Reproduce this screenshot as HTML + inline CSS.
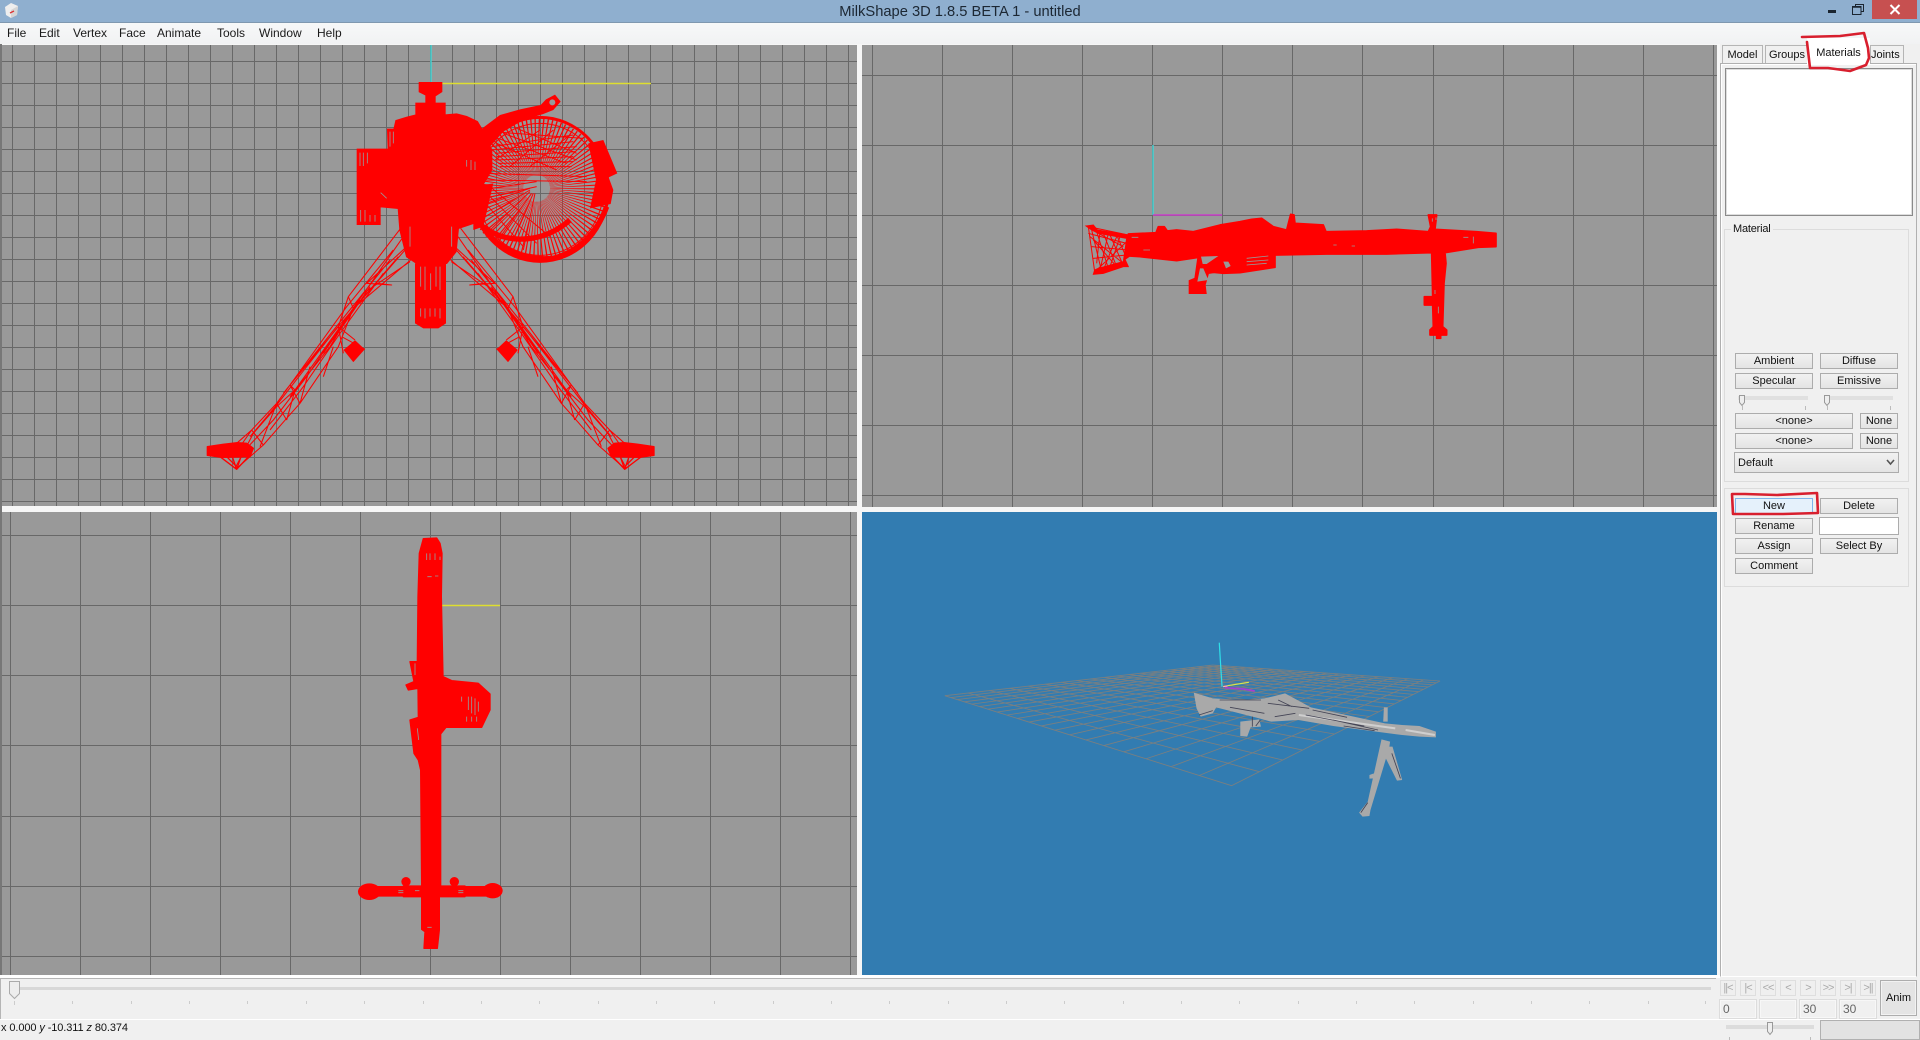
<!DOCTYPE html>
<html><head><meta charset="utf-8"><title>MilkShape 3D 1.8.5 BETA 1 - untitled</title>
<style>
html,body{margin:0;padding:0;width:1920px;height:1040px;overflow:hidden;background:#f0f0f0;font-family:"Liberation Sans",sans-serif;color:#111}
.a{position:absolute}
.vp{position:absolute;background:#999}
.b{position:absolute;box-sizing:border-box;height:16px;background:linear-gradient(#f1f1f1,#e4e4e4);border:1px solid #acacac;font-size:11px;text-align:center;line-height:15px;color:#111;white-space:nowrap}
.m{position:absolute;top:26px;font-size:12px;line-height:14px;color:#1a1a1a}
.t{position:absolute;box-sizing:border-box;top:45px;height:18px;background:#f0f0f0;border:1px solid #b5b5b5;border-bottom:0;font-size:11px;line-height:19px;text-align:center;overflow:hidden}
.n{position:absolute;box-sizing:border-box;top:980px;width:16px;height:16px;background:#efefef;border:1px solid #dedede;color:#aaa;font-size:11px;line-height:14px;text-align:center;letter-spacing:-1px}
.f{position:absolute;box-sizing:border-box;top:999px;height:20px;width:38px;background:#f0f0f0;border:1px solid #dcdcdc;box-shadow:inset 0 0 0 1px #f7f7f7;color:#666;font-size:12px;line-height:18px;padding-left:3px}
.g{position:absolute;box-sizing:border-box;border:1px solid #dcdcdc}
</style></head><body>
<!-- title bar -->
<div class="a" style="left:0;top:0;width:1920px;height:23px;background:#8fafcf;border-bottom:1px solid #7f98b0;box-sizing:border-box"></div>
<div class="a" style="left:0;top:1px;width:1920px;height:23px;text-align:center;font-size:14.7px;line-height:23px;color:#1c2733">MilkShape 3D 1.8.5 BETA 1 - untitled</div>
<svg class="a" style="left:3px;top:2px" width="17" height="17" viewBox="0 0 17 17"><path d="M8 1 15 4 14 13 8 16 3 13 2 5Z" fill="#eee"/><path d="M8 8 15 4 14 13 8 16Z" fill="#d5d5d5"/><path d="M7 11l4-2" stroke="#d33" stroke-width="1.4"/></svg>
<div class="a" style="left:1828px;top:10px;width:8px;height:3px;background:#1b2530"></div>
<svg class="a" style="left:1852px;top:4px" width="12" height="11" viewBox="0 0 12 11"><path d="M3.5 2.5V.5h8v7h-2M.5 2.5h8.5v8H.5z" fill="none" stroke="#1b2530"/><path d="M1 3h8" stroke="#1b2530" stroke-width="1.5"/></svg>
<div class="a" style="left:1872px;top:0;width:45px;height:19px;background:#c75050"></div>
<svg class="a" style="left:1889px;top:4px" width="12" height="11" viewBox="0 0 12 11"><path d="M1.5 1 10.5 10M10.5 1 1.5 10" stroke="#fff" stroke-width="2"/></svg>
<!-- menu -->
<div class="a" style="left:0;top:23px;width:1920px;height:21px;background:linear-gradient(#f7f8f9,#f1f2f3)"></div>
<span class="m" style="left:7px">File</span><span class="m" style="left:39px">Edit</span><span class="m" style="left:73px">Vertex</span><span class="m" style="left:119px">Face</span><span class="m" style="left:157px">Animate</span><span class="m" style="left:217px">Tools</span><span class="m" style="left:259px">Window</span><span class="m" style="left:317px">Help</span>
<!-- viewport area -->
<div class="a" style="left:0;top:44px;width:1720px;height:934px;background:#f6f6f6"></div>
<div class="a" style="left:0;top:44px;width:2px;height:934px;background:#777"></div>
<div class="vp" style="left:2px;top:45px;width:855px;height:461px;background-color:#999;background-image:linear-gradient(#686868 1px,transparent 1px),linear-gradient(90deg,#686868 1px,transparent 1px);background-size:22px 22px;background-position:10px 16px"></div>
<div class="vp" style="left:862px;top:45px;width:855px;height:462px"></div>
<div class="vp" style="left:2px;top:512px;width:855px;height:463px"></div>
<div class="vp" style="left:862px;top:512px;width:855px;height:463px;background:#327cb1"></div>
<svg class="a" style="left:0;top:0" width="1920" height="1040" viewBox="0 0 1920 1040" fill="none">
<!-- TR and BL grids -->
<path shape-rendering="crispEdges" stroke="#686868" d="M872.5 45V507M942.5 45V507M1012.5 45V507M1082.5 45V507M1152.5 45V507M1222.5 45V507M1292.5 45V507M1362.5 45V507M1433.5 45V507M1503.5 45V507M1573.5 45V507M1643.5 45V507M1713.5 45V507M862 75.5H1717M862 145.5H1717M862 215.5H1717M862 285.5H1717M862 355.5H1717M862 425.5H1717M862 495.5H1717
M10.5 512V975M80.5 512V975M150.5 512V975M220.5 512V975M290.5 512V975M360.5 512V975M430.5 512V975M500.5 512V975M570.5 512V975M640.5 512V975M710.5 512V975M780.5 512V975M850.5 512V975M2 535.5H857M2 605.5H857M2 675.5H857M2 745.5H857M2 816.5H857M2 886.5H857M2 956.5H857"/>

<!-- TL model -->
<path d="M431 45V83" stroke="#3fd8d8" stroke-width="1.4"/>
<path d="M442 83.500H651" stroke="#dede30" stroke-width="1.4"/>
<g transform="translate(190,60) scale(.33333)">
 <!-- legs -->
 <g stroke="#f00" stroke-width="3.2" stroke-linejoin="round">
  <path d="M632 505 475 710 445 800 300 975 260 1030 185 1110 140 1150 55 1165M640 530 490 745 415 850 315 990 260 1040 190 1120 135 1225M650 560 530 670 605 675 530 670M662 600 490 745 445 860 330 1030 290 1075 220 1155 140 1225M610 570 470 740 300 975M625 590 440 805 260 1035 180 1130M660 605 520 700 350 950 250 1080 165 1170M475 710 490 745M445 800 460 880M300 975 330 1030M260 1030 290 1080M185 1110 220 1155M300 975 315 990 290 1080M560 670 605 675M600 600 455 780 280 1000M645 570 480 760 420 860 300 1010M580 640 450 820 340 980 240 1110M540 680 430 840M510 720 400 880M495 840 445 800M525 868 455 830M360 920 330 1030M430 860 400 950M220 1155 185 1110 150 1160M260 1030 210 1160"/>
  <path fill="#f00" stroke="#f00" stroke-width="4" d="M52 1160 100 1153 142 1148 170 1150 190 1165 180 1190 95 1192 52 1186Z"/>
  <path stroke-width="4" d="M90 1190 140 1228 180 1185M140 1228 120 1170M140 1228 160 1170M110 1190 140 1220"/>
  <path fill="#f00" stroke="#f00" stroke-width="2" d="M462 870 495 842 523 868 490 905Z"/>
 </g>
 <g stroke="#f00" stroke-width="3.2" stroke-linejoin="round" transform="translate(1444,0) scale(-1,1)">
  <path d="M632 505 475 710 445 800 300 975 260 1030 185 1110 140 1150 55 1165M640 530 490 745 415 850 315 990 260 1040 190 1120 135 1225M650 560 530 670 605 675 530 670M662 600 490 745 445 860 330 1030 290 1075 220 1155 140 1225M610 570 470 740 300 975M625 590 440 805 260 1035 180 1130M660 605 520 700 350 950 250 1080 165 1170M475 710 490 745M445 800 460 880M300 975 330 1030M260 1030 290 1080M185 1110 220 1155M300 975 315 990 290 1080M560 670 605 675M600 600 455 780 280 1000M645 570 480 760 420 860 300 1010M580 640 450 820 340 980 240 1110M540 680 430 840M510 720 400 880M495 840 445 800M525 868 455 830M360 920 330 1030M430 860 400 950M220 1155 185 1110 150 1160M260 1030 210 1160"/>
  <path fill="#f00" stroke="#f00" stroke-width="4" d="M52 1160 100 1153 142 1148 170 1150 190 1165 180 1190 95 1192 52 1186Z"/>
  <path stroke-width="4" d="M90 1190 140 1228 180 1185M140 1228 120 1170M140 1228 160 1170M110 1190 140 1220"/>
  <path fill="#f00" stroke="#f00" stroke-width="2" d="M462 870 495 842 523 868 490 905Z"/>
 </g>
 <!-- drum -->
 <circle cx="1040" cy="385" r="125" stroke="#f00" stroke-width="170" stroke-dasharray="2.500 5.500"/>
 <ellipse cx="1050" cy="388" rx="205" ry="216" stroke="#f00" stroke-width="9"/>
 <ellipse cx="1050" cy="388" rx="190" ry="198" stroke="#f00" stroke-width="3"/>
 <path d="M862 470C900 560 1000 605 1090 595 1170 575 1225 510 1250 440" stroke="#f00" stroke-width="16"/>
 <path d="M880 500C950 555 1060 550 1140 480" stroke="#f00" stroke-width="16"/>
 <path d="M905 260 1150 225M905 270 1150 245M915 280 1160 260M920 290 1155 275M920 300 1150 290M925 310 1150 305M930 320 1145 320M910 230 1130 310M940 220 1160 300M980 205 1160 280M920 250 1100 330M915 300 1050 210M960 320 1090 210M1020 320 1140 225M880 340 1190 350M885 360 1190 365M870 390 1040 365M860 420 1040 380M905 215 1180 235" stroke="#f00" stroke-width="3"/>
 <path d="M860 400 1000 560M880 390 1040 550M900 380 1080 530M860 440 1020 385M870 480 1020 390M890 520 1020 395M920 545 1025 400M960 560 1030 400M1000 570 1035 400" stroke="#f00" stroke-width="3"/>
 <path fill="#f00" d="M870 210 930 165 990 148 1052 135 1068 118 1095 104 1112 125 1090 150 1060 162 1000 180 940 215 900 260Z"/>
 <circle cx="1087" cy="127" r="9" fill="#999"/>
 <path fill="#f00" d="M1195 250 1240 240 1282 340 1256 352 1270 390 1262 432 1200 445 1218 360Z"/>
 <!-- body -->
 <path fill="#f00" stroke="#f00" stroke-width="4" d="M688 68H755V95L735 108V130H765V165L800 162 830 170 862 185 880 215 905 270 905 330 878 375 860 420 850 490 805 505 798 575 770 610 680 610 650 590 630 510 625 445 570 440V493H502V268H595L593 208H612L618 182 650 172 678 165V130H708V105L688 95Z"/>
 <path fill="#f00" d="M850 380 910 370 880 500 850 510ZM675 610H768V790L745 805H700L675 790Z"/>
 <path stroke="#999" stroke-width="2.500" d="M510 278V318M520 278V318M532 278V310M512 450V485M525 450V485M540 465V485M555 465V485M600 215V260M610 215V250M830 300V320M843 300V330M855 305V330M692 620V680M705 620V690M722 640V690M738 620V680M750 620V690M692 745V770M705 745V775M720 745V770M735 745V770M750 745V775M660 500V560M785 500V560M572 398 590 415"/>
</g>

<!-- TR model -->
<path d="M1153 145V215" stroke="#3fd8d8" stroke-width="1.4"/>
<path d="M1153 215H1222" stroke="#c93fc9" stroke-width="1.6"/>
<g transform="translate(1060,130) scale(.33333)">
 <path stroke="#f00" stroke-width="3" d="M85 290 205 315M85 290 105 432M95 300 125 425M110 305 145 415M130 310 170 410M150 315 185 395M170 315 200 385M85 310 200 340M95 350 205 360M100 385 200 375M105 425 200 335M100 330 170 410M120 305 110 400M145 310 120 420M170 320 130 420M90 320 190 400M115 310 190 350M180 320 150 410"/>
 <path fill="#f00" stroke="#f00" stroke-width="3" d="M78 288 100 285 112 300 206 315 210 378 195 388 205 410 190 410 130 430 100 433 104 420 115 415 190 395 200 325 115 310 95 300Z"/>
 <path fill="#f00" stroke="#f00" stroke-width="5" stroke-linejoin="round" d="M205 312 288 308 295 290 313 290 322 303 350 300 400 305 480 285 540 275 575 268 605 265 640 290 680 300 692 253 702 255 705 280 790 285 798 305 920 303 1010 298 1105 305 1112 290 1105 255 1130 255 1125 298 1250 305 1308 310 1308 350 1255 352 1155 368 1158 400 1152 460 1148 590 1160 600 1160 615 1142 615 1142 625 1130 625 1130 615 1110 615 1110 600 1120 590 1118 525 1093 525 1093 500 1118 500 1115 368 980 372 800 372 645 375 645 412 540 428 490 430 440 425 450 420 430 380 350 392 240 380 210 378Z"/>
 <path fill="#f00" stroke="#f00" stroke-width="4" d="M415 375 500 375 510 420 445 430 435 465 438 490 388 490 388 452 405 445Z"/>
 <path fill="#999" d="M423 380 475 378 440 402 428 402ZM420 415 430 415 445 450 412 455ZM490 395 505 395 512 408 498 415Z"/>
 <path stroke="#999" stroke-width="2.500" d="M560 385 625 378M560 395 625 390M560 405 620 400M1125 480V492M1135 530V550M215 322H235M250 360H270M820 345H830M875 348H885M1210 322H1225M1240 320V340M1117 265V275M1128 262V270"/>
</g>

<!-- BL model -->
<path d="M441 605.500H500" stroke="#dede30" stroke-width="1.4"/>
<g transform="translate(340,520) scale(.33333)">
 <path fill="#f00" stroke="#f00" stroke-width="4" stroke-linejoin="round" d="M250 56 290 54 300 70 306 100 304 230 309 470 335 482 415 490 450 522 450 570 425 622 318 622 302 642 302 1098 375 1098 375 1130 298 1130 298 1230 292 1285H252L255 1235 245 1228 245 1130 190 1130 190 1098 245 1098 242 750 235 720 222 700 210 600 235 592 234 505 205 510 198 495 222 485 210 425 232 425 234 230 238 100Z"/>
 <path fill="#f00" d="M90 1098H450V1130H90Z"/>
 <ellipse cx="88" cy="1115" rx="34" ry="25" fill="#f00"/><ellipse cx="458" cy="1112" rx="30" ry="23" fill="#f00"/>
 <circle cx="198" cy="1085" r="14" fill="#f00"/><circle cx="343" cy="1085" r="14" fill="#f00"/>
 <path stroke="#999" stroke-width="2.500" d="M260 100V120M270 100V120M285 100V120M300 110V120M262 170H275M285 168H295M365 530V545M385 530V570M395 530V580M405 535V585M415 545V575M380 590V605M395 590V605M410 590V605M225 430V465M232 625 236 660M175 1112H190M175 1118H190M225 1112H238M355 1112H370M355 1118H370M262 1222H275"/>
</g>

<!-- BR plane -->
<g transform="translate(920,620) scale(.3444,.33333)" stroke="#7a7f80" stroke-width="2.600">
 <path d="M850 135 72 227M872.700 136.600 89.700 232.700M896 138.300 108.600 238.800M920.200 140.100 128.700 245.400M945.300 141.900 150.200 252.400M971.200 143.800 173.100 259.700M998 145.800 197.700 267.700M1026 147.800 224 276.300M1054.700 149.900 252.400 285.400M1084.800 152.100 283.100 295.400M1115.800 154.300 316.100 306.100M1148.200 156.700 352.100 317.900M1182 159.200 391.500 330.600M1217 161.700 434.300 344.400M1253.700 164.400 481.700 359.900M1291.800 167.200 533.800 376.800M1331.500 170 591.400 395.400M1373.200 173 656.300 416.300M1416.700 176.300 728.800 440M1462.200 179.600 811 466.600M1510 183 905 497
 M850 135 1510 183M827.900 137.600 1499.300 188.600M804.700 140.400 1487.900 194.500M780.500 143.200 1475.600 200.900M755 146.200 1462.400 207.800M728.300 149.400 1448.100 215.200M700.300 152.700 1432.700 223.200M670.700 156.200 1416 231.900M639.600 159.900 1397.700 241.400M606.700 163.800 1377.800 251.700M571.900 167.800 1355.600 263M535.100 172.200 1331.400 275.600M496.100 176.800 1304.600 289.500M454.700 181.700 1274.700 305M410.600 186.900 1241.200 322.400M363.500 192.500 1203.300 342M313.200 198.400 1160.200 364.400M259.400 204.800 1110.600 390.100M201.500 211.600 1053.100 420M139.200 219 985.400 455.100M72 227 905 497"/>
 <!-- axes -->
 <path d="M869 68 872 120 877 200" stroke="#2fe0e8" stroke-width="3.500"/>
 <path d="M893 197 955 187" stroke="#d8e84a" stroke-width="3.500"/>
 <path d="M880 200 893 198" stroke="#ffb0b0" stroke-width="3.500"/>
 <path d="M885 203 940 207 972 213" stroke="#a63ed0" stroke-width="5"/>
 <!-- gun -->
 <g stroke="none" fill="#a9a9a9">
  <path d="M795 218 850 235 945 240 1000 235 1030 228 1060 220 1135 262 1350 310 1400 315 1450 318 1498 335 1498 352 1450 350 1400 345 1200 318 1100 300 1020 305 985 295 860 262 850 280 815 290 803 265Z"/>
  <path d="M930 305 985 298 990 320 960 322 950 350 930 348Z"/>
  <path d="M1340 358 1365 365 1362 385 1308 570 1305 588 1285 590 1275 578 1300 545Z"/>
  <path d="M1358 380 1372 380 1400 480 1385 482 1350 410Z"/>
  <path d="M1347 262H1358V305H1345Z"/>
  <path d="M1305 465 1318 460 1318 475 1305 476Z"/>
 </g>
 <path stroke="#cfcfcf" stroke-width="6" d="M1100 285 1380 325M1410 330 1495 345"/>
 <path stroke="#445" stroke-width="2.500" d="M870 240 990 240M900 262 1000 280M1010 250 1130 265M1120 285 1290 318M1200 300 1330 330M1030 290 1090 280M965 290V320M975 318 988 300M1040 240 1080 260M1370 400 1395 475M1280 578 1300 548M810 285 850 272M1140 270 1240 292M1230 318 1320 332"/>
</g>
</svg>

<!-- right panel -->
<div class="a" style="left:1720px;top:44px;width:200px;height:934px;background:#f0f0f0"></div>
<div class="a" style="left:1720px;top:63px;width:197px;height:914px;box-sizing:border-box;border:1px solid #b0b0b0;border-bottom-color:#fff;background:#f0f0f0;box-shadow:inset 1px 1px 0 #fff"></div>
<div class="t" style="left:1722px;width:41px">Model</div>
<div class="t" style="left:1765px;width:44px">Groups</div>
<div class="t" style="left:1870px;width:34px;text-align:right;padding-right:4px">Joints</div>
<div class="a" style="left:1807px;top:38px;width:63px;height:27px;background:#fff;font-size:11px;line-height:31px;text-align:center;color:#111;box-sizing:border-box">Materials</div>
<div class="a" style="left:1725px;top:68px;width:188px;height:148px;box-sizing:border-box;border:1px solid #8a8a8a;background:#fff;box-shadow:inset 0 0 0 1px #ddd"></div>
<div class="g" style="left:1724px;top:229px;width:185px;height:253px"></div>
<div class="a" style="left:1731px;top:222px;background:#f0f0f0;padding:0 2px;font-size:11px;line-height:14px;letter-spacing:-.2px">Material</div>
<div class="g" style="left:1724px;top:488px;width:185px;height:99px"></div>
<div class="b" style="left:1735px;top:353px;width:78px">Ambient</div>
<div class="b" style="left:1820px;top:353px;width:78px">Diffuse</div>
<div class="b" style="left:1735px;top:373px;width:78px">Specular</div>
<div class="b" style="left:1820px;top:373px;width:78px">Emissive</div>
<div class="a" style="left:1738px;top:396px;width:70px;height:4px;background:#e0e0e0"></div>
<div class="a" style="left:1824px;top:396px;width:69px;height:4px;background:#e0e0e0"></div>
<svg class="a" style="left:1730px;top:392px" width="170" height="20" fill="none"><path d="M9.500 3.500h5v7l-2.500 3-2.500-3z" fill="#eee" stroke="#999"/><path d="M94.500 3.500h5v7l-2.500 3-2.500-3z" fill="#eee" stroke="#999"/><path d="M12.500 14v4M75.500 14v4M97.500 14v4M160.500 14v4" stroke="#bbb"/></svg>
<div class="b" style="left:1735px;top:413px;width:118px">&lt;none&gt;</div>
<div class="b" style="left:1860px;top:413px;width:38px">None</div>
<div class="b" style="left:1735px;top:433px;width:118px">&lt;none&gt;</div>
<div class="b" style="left:1860px;top:433px;width:38px">None</div>
<div class="b" style="left:1734px;top:452px;width:165px;height:21px;text-align:left;line-height:20px;padding-left:3px">Default</div>
<svg class="a" style="left:1886px;top:459px" width="9" height="7"><path d="M1 1l3.500 4L8 1" fill="none" stroke="#555" stroke-width="1.600"/></svg>
<div class="b" style="left:1735px;top:498px;width:78px;background:#e5f1fb;border-color:#7eb4ea">New</div>
<div class="b" style="left:1820px;top:498px;width:78px">Delete</div>
<div class="b" style="left:1735px;top:518px;width:78px">Rename</div>
<div class="a" style="left:1819px;top:517px;width:80px;height:18px;box-sizing:border-box;background:#fff;border:1px solid #acacac"></div>
<div class="b" style="left:1735px;top:538px;width:78px">Assign</div>
<div class="b" style="left:1820px;top:538px;width:78px">Select By</div>
<div class="b" style="left:1735px;top:558px;width:78px">Comment</div>
<!-- timeline -->
<div class="a" style="left:0;top:975px;width:1720px;height:3px;background:#fff"></div>
<div class="a" style="left:0;top:978px;width:1716px;height:41px;background:#f0f0f0;border-top:1px solid #b5b5b5;border-left:1px solid #b5b5b5;box-sizing:border-box"></div>
<div class="a" style="left:0;top:1019px;width:1920px;height:1px;background:#fff"></div>
<div class="a" style="left:10px;top:987px;width:1701px;height:3px;background:#d8d8d8"></div>
<svg class="a" style="left:0;top:978px" width="1720" height="30" fill="none">
<path d="M9.500 3.500h10v12l-5 5-5-5z" fill="#ededed" stroke="#aaa"/>
<path stroke="#ccc" d="M14.500 23v4M72.500 23v3M131.500 23v3M189.500 23v3M247.500 23v3M306.500 23v3M364.500 23v3M423.500 23v3M481.500 23v3M539.500 23v3M598.500 23v3M656.500 23v3M714.500 23v3M773.500 23v3M831.500 23v3M889.500 23v3M948.500 23v3M1006.500 23v3M1064.500 23v3M1123.500 23v3M1181.500 23v3M1239.500 23v3M1298.500 23v3M1356.500 23v3M1414.500 23v3M1473.500 23v3M1531.500 23v3M1589.500 23v3M1648.500 23v3M1705.500 23v3"/>
</svg>
<div class="n" style="left:1720px">||&lt;</div>
<div class="n" style="left:1740px">|&lt;</div>
<div class="n" style="left:1760px">&lt;&lt;</div>
<div class="n" style="left:1780px">&lt;</div>
<div class="n" style="left:1800px">&gt;</div>
<div class="n" style="left:1820px">&gt;&gt;</div>
<div class="n" style="left:1840px">&gt;|</div>
<div class="n" style="left:1860px">&gt;||</div>
<div class="f" style="left:1719px">0</div>
<div class="f" style="left:1759px"></div>
<div class="f" style="left:1799px">30</div>
<div class="f" style="left:1839px">30</div>
<div class="b" style="left:1880px;top:980px;width:37px;height:36px;line-height:34px;background:#e4e4e4;border-color:#adadad;font-size:11px;box-shadow:inset 0 0 0 1px #f2f2f2">Anim</div>
<!-- status -->
<div class="a" style="left:1px;top:1021px;font-size:11px;line-height:14px;color:#111;white-space:nowrap;letter-spacing:-.1px">x 0.000 <i>y</i> -10.311 <i>z</i> 80.374</div>
<div class="a" style="left:1726px;top:1025px;width:88px;height:4px;background:#dcdcdc"></div>
<svg class="a" style="left:1720px;top:1020px" width="100" height="20" fill="none"><path d="M47.500 2.500h5v9l-2.500 3-2.500-3z" fill="#eee" stroke="#999"/><path d="M9.500 17v3M90.500 17v3" stroke="#bbb"/></svg>
<div class="a" style="left:1820px;top:1020px;width:100px;height:20px;box-sizing:border-box;background:#e2e2e2;border:1px solid #b0b0b0"></div>
<!-- red annotations -->
<svg class="a" style="left:0;top:0" width="1920" height="1040" fill="none" stroke="#d81f2e" stroke-width="2.600" stroke-linejoin="round" stroke-linecap="round">
<path d="M1802 37 1840 36 1864 33 1868 48 1869 58 1866 65 1850 71 1828 68 1810 68 1807 42"/>
<path d="M1732 494 1745 494 1777 495 1817 493 1818 513 1783 514 1733 514Z"/>
</svg>
</body></html>
